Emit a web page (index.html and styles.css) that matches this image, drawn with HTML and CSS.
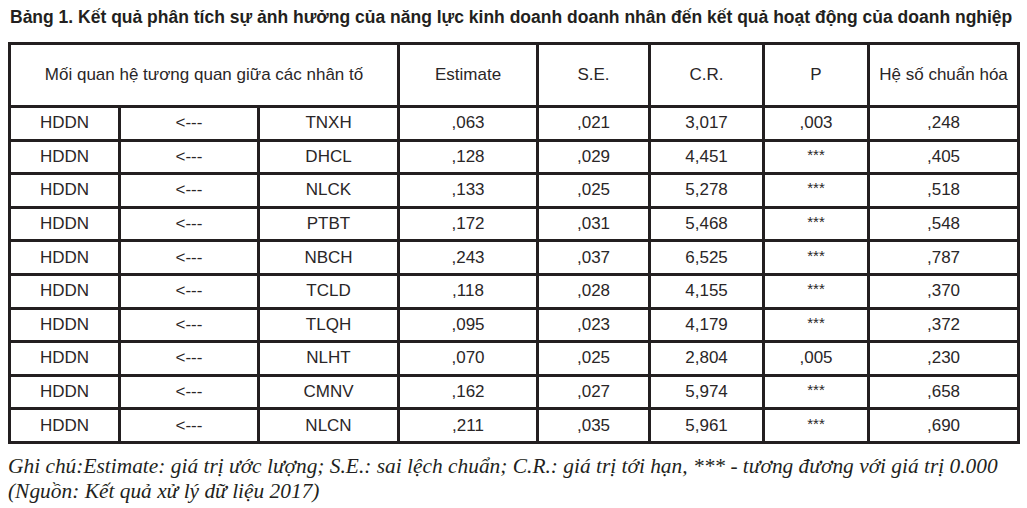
FILE: index.html
```html
<!DOCTYPE html>
<html lang="vi">
<head>
<meta charset="utf-8">
<title>Bảng 1</title>
<link rel="stylesheet" href="styles.css">
</head>
<body>
<div class="page">
  <h1 class="title">Bảng 1. Kết quả phân tích sự ảnh hưởng của năng lực kinh doanh doanh nhân đến kết quả hoạt động của doanh nghiệp</h1>
  <table class="data">
    <colgroup>
      <col class="c1"><col class="c2"><col class="c3"><col class="c4"><col class="c5"><col class="c6"><col class="c7"><col class="c8">
    </colgroup>
    <thead>
      <tr class="head">
        <th colspan="3">Mối quan hệ tương quan giữa các nhân tố</th>
        <th>Estimate</th>
        <th>S.E.</th>
        <th>C.R.</th>
        <th>P</th>
        <th>Hệ số chuẩn hóa</th>
      </tr>
    </thead>
    <tbody>
      <tr><td>HDDN</td><td>&lt;---</td><td>TNXH</td><td>,063</td><td>,021</td><td>3,017</td><td>,003</td><td>,248</td></tr>
      <tr><td>HDDN</td><td>&lt;---</td><td>DHCL</td><td>,128</td><td>,029</td><td>4,451</td><td class="star">***</td><td>,405</td></tr>
      <tr><td>HDDN</td><td>&lt;---</td><td>NLCK</td><td>,133</td><td>,025</td><td>5,278</td><td class="star">***</td><td>,518</td></tr>
      <tr><td>HDDN</td><td>&lt;---</td><td>PTBT</td><td>,172</td><td>,031</td><td>5,468</td><td class="star">***</td><td>,548</td></tr>
      <tr><td>HDDN</td><td>&lt;---</td><td>NBCH</td><td>,243</td><td>,037</td><td>6,525</td><td class="star">***</td><td>,787</td></tr>
      <tr><td>HDDN</td><td>&lt;---</td><td>TCLD</td><td>,118</td><td>,028</td><td>4,155</td><td class="star">***</td><td>,370</td></tr>
      <tr><td>HDDN</td><td>&lt;---</td><td>TLQH</td><td>,095</td><td>,023</td><td>4,179</td><td class="star">***</td><td>,372</td></tr>
      <tr><td>HDDN</td><td>&lt;---</td><td>NLHT</td><td>,070</td><td>,025</td><td>2,804</td><td>,005</td><td>,230</td></tr>
      <tr><td>HDDN</td><td>&lt;---</td><td>CMNV</td><td>,162</td><td>,027</td><td>5,974</td><td class="star">***</td><td>,658</td></tr>
      <tr><td>HDDN</td><td>&lt;---</td><td>NLCN</td><td>,211</td><td>,035</td><td>5,961</td><td class="star">***</td><td>,690</td></tr>
    </tbody>
  </table>
  <p class="note">Ghi chú:Estimate: giá trị ước lượng; S.E.: sai lệch chuẩn; C.R.: giá trị tới hạn, *** - tương đương với giá trị 0.000</p>
  <p class="note">(Nguồn: Kết quả xử lý dữ liệu 2017)</p>
</div>
</body>
</html>
```

FILE: styles.css
```css
html, body {
  margin: 0;
  padding: 0;
  background: #ffffff;
}

.page {
  padding: 7px 0 0 8px;
  color: #231f20;
  font-family: "Liberation Sans", Arial, sans-serif;
}

.title {
  margin: 0 0 15px 2px;
  font-size: 17.5px;
  font-weight: bold;
  line-height: 20px;
  white-space: nowrap;
}

.data {
  border-collapse: separate;
  border-spacing: 0;
  table-layout: fixed;
  width: 1012px;
  border-top: 3px solid #231f20;
  border-left: 3px solid #231f20;
}

.c1 { width: 110px; }
.c2 { width: 139px; }
.c3 { width: 140px; }
.c4 { width: 139px; }
.c5 { width: 112px; }
.c6 { width: 114px; }
.c7 { width: 105px; }
.c8 { width: 150px; }

.data th,
.data td {
  padding: 0;
  text-align: center;
  font-weight: normal;
  font-size: 17px;
  color: #2a2627;
  border-right: 3px solid #231f20;
  border-bottom: 3px solid #231f20;
  box-sizing: border-box;
}

.head th {
  height: 63px;
}

.data tbody tr {
  height: 33.6px;
}

.data td.star {
  font-size: 15px;
  vertical-align: middle;
  padding-bottom: 5px;
}

.note {
  margin: 0;
  font-family: "Liberation Serif", "Times New Roman", serif;
  font-style: italic;
  font-size: 21.4px;
  line-height: 25px;
  white-space: nowrap;
}

.data + .note {
  margin-top: 10px;
}
```
